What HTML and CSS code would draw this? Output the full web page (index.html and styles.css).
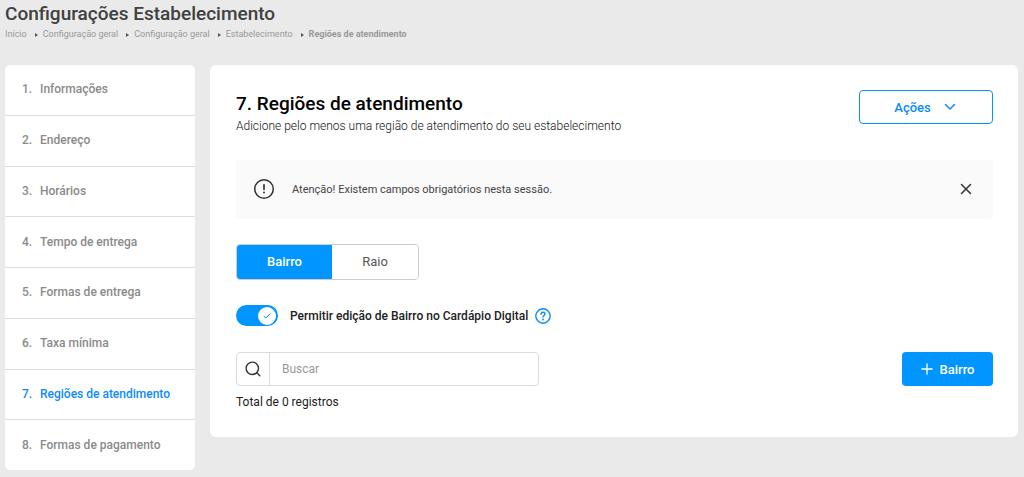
FILE: index.html
```html
<!DOCTYPE html>
<html lang="pt-BR">
<head>
<meta charset="utf-8">
<meta name="viewport" content="width=device-width, initial-scale=1">
<title>Configurações Estabelecimento</title>
<link rel="stylesheet" href="styles.css">
</head>
<body>
<header class="page-header">
  <h1 class="page-title">Configurações Estabelecimento</h1>
  <nav aria-label="Trilha">
    <ol class="breadcrumb">
      <li><a href="#">Início</a></li>
      <li><a href="#">Configuração geral</a></li>
      <li><a href="#">Configuração geral</a></li>
      <li><a href="#">Estabelecimento</a></li>
      <li class="current" aria-current="page">Regiões de atendimento</li>
    </ol>
  </nav>
</header>
<div class="layout">
  <nav class="steps" aria-label="Etapas">
    <a class="step" href="#"><span class="num">1.</span>Informações</a>
    <a class="step" href="#"><span class="num">2.</span>Endereço</a>
    <a class="step" href="#"><span class="num">3.</span>Horários</a>
    <a class="step" href="#"><span class="num">4.</span>Tempo de entrega</a>
    <a class="step" href="#"><span class="num">5.</span>Formas de entrega</a>
    <a class="step" href="#"><span class="num">6.</span>Taxa mínima</a>
    <a class="step active" href="#"><span class="num">7.</span>Regiões de atendimento</a>
    <a class="step" href="#"><span class="num">8.</span>Formas de pagamento</a>
  </nav>
  <main class="panel">
    <div class="panel-head">
      <div>
        <h2 class="panel-title">7. Regiões de atendimento</h2>
        <p class="panel-sub">Adicione pelo menos uma região de atendimento do seu estabelecimento</p>
      </div>
      <button class="actions" type="button">Ações
        <svg width="12" height="8" viewBox="0 0 12 8" fill="none" stroke="currentColor" stroke-width="1.5" stroke-linecap="round" stroke-linejoin="round" aria-hidden="true"><path d="M1.5 1.5 6 6l4.500-4.500"/></svg>
      </button>
    </div>
    <div class="alert" role="alert">
      <svg width="22" height="22" viewBox="0 0 22 22" fill="none" stroke="#333" stroke-width="1.500" stroke-linecap="round" aria-hidden="true"><circle cx="11" cy="11" r="9.300"/><path d="M11 6.800v4.500" stroke-width="1.700"/><circle cx="11" cy="14.500" r="1" fill="#333" stroke="none"/></svg>
      <span class="alert-text">Atenção! Existem campos obrigatórios nesta sessão.</span>
      <button class="close" type="button" aria-label="Fechar"><svg width="12" height="12" viewBox="0 0 12 12" fill="none" stroke="currentColor" stroke-width="1.500" stroke-linecap="round" aria-hidden="true"><path d="m1.500 1.500 9 9m0-9-9 9"/></svg></button>
    </div>
    <div class="tabs">
      <button class="tab selected" type="button">Bairro</button>
      <button class="tab" type="button">Raio</button>
    </div>
    <div class="switch-row">
      <label class="switch-label">
        <span class="switch">
          <input class="switch-input" type="checkbox" checked>
          <span class="knob"><svg width="8" height="6" viewBox="0 0 8 6" fill="none" stroke="currentColor" stroke-width="1" stroke-linecap="round" stroke-linejoin="round" aria-hidden="true"><path d="M1 3.200 2.800 5 7 1"/></svg></span>
        </span>
        Permitir edição de Bairro no Cardápio Digital
      </label>
      <button class="help" type="button" aria-label="Ajuda"><svg width="16" height="16" viewBox="0 0 16 16" fill="none" stroke="currentColor" stroke-width="1.400" stroke-linecap="round" stroke-linejoin="round" aria-hidden="true"><circle cx="8" cy="8" r="7.200"/><path d="M6 6.200C6.100 4.900 6.900 4.200 8 4.200s2 .7 2 1.800C10 7.500 8 7.500 8 9"/><circle cx="8" cy="11.500" r=".9" fill="currentColor" stroke="none"/></svg></button>
    </div>
    <div class="toolbar">
      <label class="search">
        <span class="search-icon"><svg width="16" height="16" viewBox="0 0 16 16" fill="none" stroke="currentColor" stroke-width="1.400" stroke-linecap="round" aria-hidden="true"><circle cx="7.300" cy="7.300" r="6.200"/><path d="m11.800 11.800 3 3"/></svg></span>
        <input class="search-input" type="text" placeholder="Buscar" aria-label="Buscar">
      </label>
      <button class="add" type="button"><svg width="12" height="12" viewBox="0 0 12 12" fill="none" stroke="currentColor" stroke-width="1.300" stroke-linecap="round" aria-hidden="true"><path d="M6 .8v10.400M.8 6h10.400"/></svg>Bairro</button>
    </div>
    <p class="total">Total de 0 registros</p>
  </main>
</div>
</body>
</html>
```
FILE: styles.css
```css
* { box-sizing: border-box; }
body {
  margin: 0;
  padding: 2px 6px 6px 5px;
  background: #eaeaea;
  color: #212121;
  font-family: Roboto, "Liberation Sans", sans-serif;
  font-size: 12px;
}
h1, h2, p, ol { margin: 0; padding: 0; }
a { color: inherit; text-decoration: none; }
button, input { font: inherit; color: inherit; }
button { cursor: pointer; margin: 0; }
svg { display: block; flex: none; }

.page-title { font-size: 19px; line-height: 24px; font-weight: 500; color: #404040; }
.breadcrumb {
  display: flex;
  flex-wrap: wrap;
  list-style: none;
  font-size: 9px;
  line-height: 16px;
  color: #999;
}
.breadcrumb li { display: flex; align-items: center; }
.breadcrumb li + li::before {
  content: "";
  margin: 2px 5px 0 8px;
  border: 2px solid transparent;
  border-left: 3px solid #555;
  border-right: 0;
}
.breadcrumb .current { font-weight: 700; }

.layout {
  display: grid;
  grid-template-columns: 190px 1fr;
  gap: 15px;
  align-items: start;
  margin-top: 23px;
}
.steps {
  display: flex;
  flex-direction: column;
  min-height: 405px;
  background: #fff;
  border-radius: 5px;
}
.step {
  display: flex;
  flex: 1;
  align-items: center;
  padding: 0 17px 1px;
  font-weight: 500;
  font-size: 12px;
  color: #8a8a8a;
}
.step + .step { border-top: 1px solid #dcdcdc; }
.step .num { width: 18px; }
.step.active { color: #0a8cff; }

.panel {
  padding: 25px 25px 26px 26px;
  background: #fff;
  border-radius: 6px;
}
.panel-head { display: flex; justify-content: space-between; align-items: flex-start; }
.panel-title { margin-top: 2px; font-size: 19px; line-height: 24px; font-weight: 500; color: #000; }
.panel-sub { line-height: 20px; color: #111; font-weight: 300; }
.actions {
  display: flex;
  align-items: center;
  justify-content: center;
  gap: 13px;
  width: 134px;
  height: 34px;
  padding: 0 2px 0 0;
  border: 1px solid #0095ff;
  border-radius: 4px;
  background: #fff;
  color: #0a8cff;
  font-size: 13px;
  font-weight: 500;
}
.alert {
  display: flex;
  align-items: center;
  gap: 17px;
  min-height: 59px;
  margin-top: 24px;
  padding: 0 21px 1px 17px;
  background: #fafafa;
  border-radius: 4px;
  color: #444;
  font-size: 11px;
}
.alert-text { flex: 1; }
.close { padding: 0; border: 0; background: none; color: #333; }
.tabs {
  display: inline-flex;
  margin-top: 25px;
  border: 1px solid #ccc;
  border-radius: 4px;
  overflow: hidden;
  vertical-align: top;
}
.tab {
  height: 34px;
  width: 86px;
  padding: 0 0 2px;
  border: 0;
  background: #fff;
  color: #555;
  font-size: 13px;
}
.tab.selected { width: 95px; background: #0095ff; color: #fff; font-weight: 500; }
.switch-row { display: flex; align-items: center; gap: 7px; margin-top: 25px; }
.switch-label { display: flex; align-items: center; gap: 12px; font-weight: 500; color: #212121; }
.switch { display: grid; align-items: center; width: 42px; height: 21px; }
.switch-input {
  appearance: none;
  grid-area: 1 / 1;
  width: 42px;
  height: 21px;
  margin: 0;
  border-radius: 11px;
  background: #0095ff;
}
.knob {
  display: grid;
  place-items: center;
  grid-area: 1 / 1;
  justify-self: end;
  width: 18px;
  height: 18px;
  margin-right: 2px;
  border-radius: 50%;
  background: #fff;
  color: #0095ff;
  pointer-events: none;
}
.help { padding: 0; border: 0; background: none; color: #0a8cff; }
.toolbar { display: flex; justify-content: space-between; margin-top: 26px; }
.search {
  display: flex;
  width: 303px;
  height: 34px;
  border: 1px solid #d9dbdd;
  border-radius: 4px;
}
.search-icon {
  display: grid;
  place-items: center;
  width: 33px;
  border-right: 1px solid #d9dbdd;
  color: #333;
}
.search-input {
  flex: 1;
  min-width: 0;
  padding: 0 12px;
  border: 0;
  background: none;
  outline: 0;
}
.search-input::placeholder { color: #999; opacity: 1; }
.add {
  display: flex;
  align-items: center;
  justify-content: center;
  gap: 7px;
  width: 91px;
  height: 34px;
  padding: 0;
  border: 0;
  border-radius: 4px;
  background: #0095ff;
  color: #fff;
  font-size: 13px;
  font-weight: 500;
}
.total { margin-top: 7px; line-height: 18px; }
```
